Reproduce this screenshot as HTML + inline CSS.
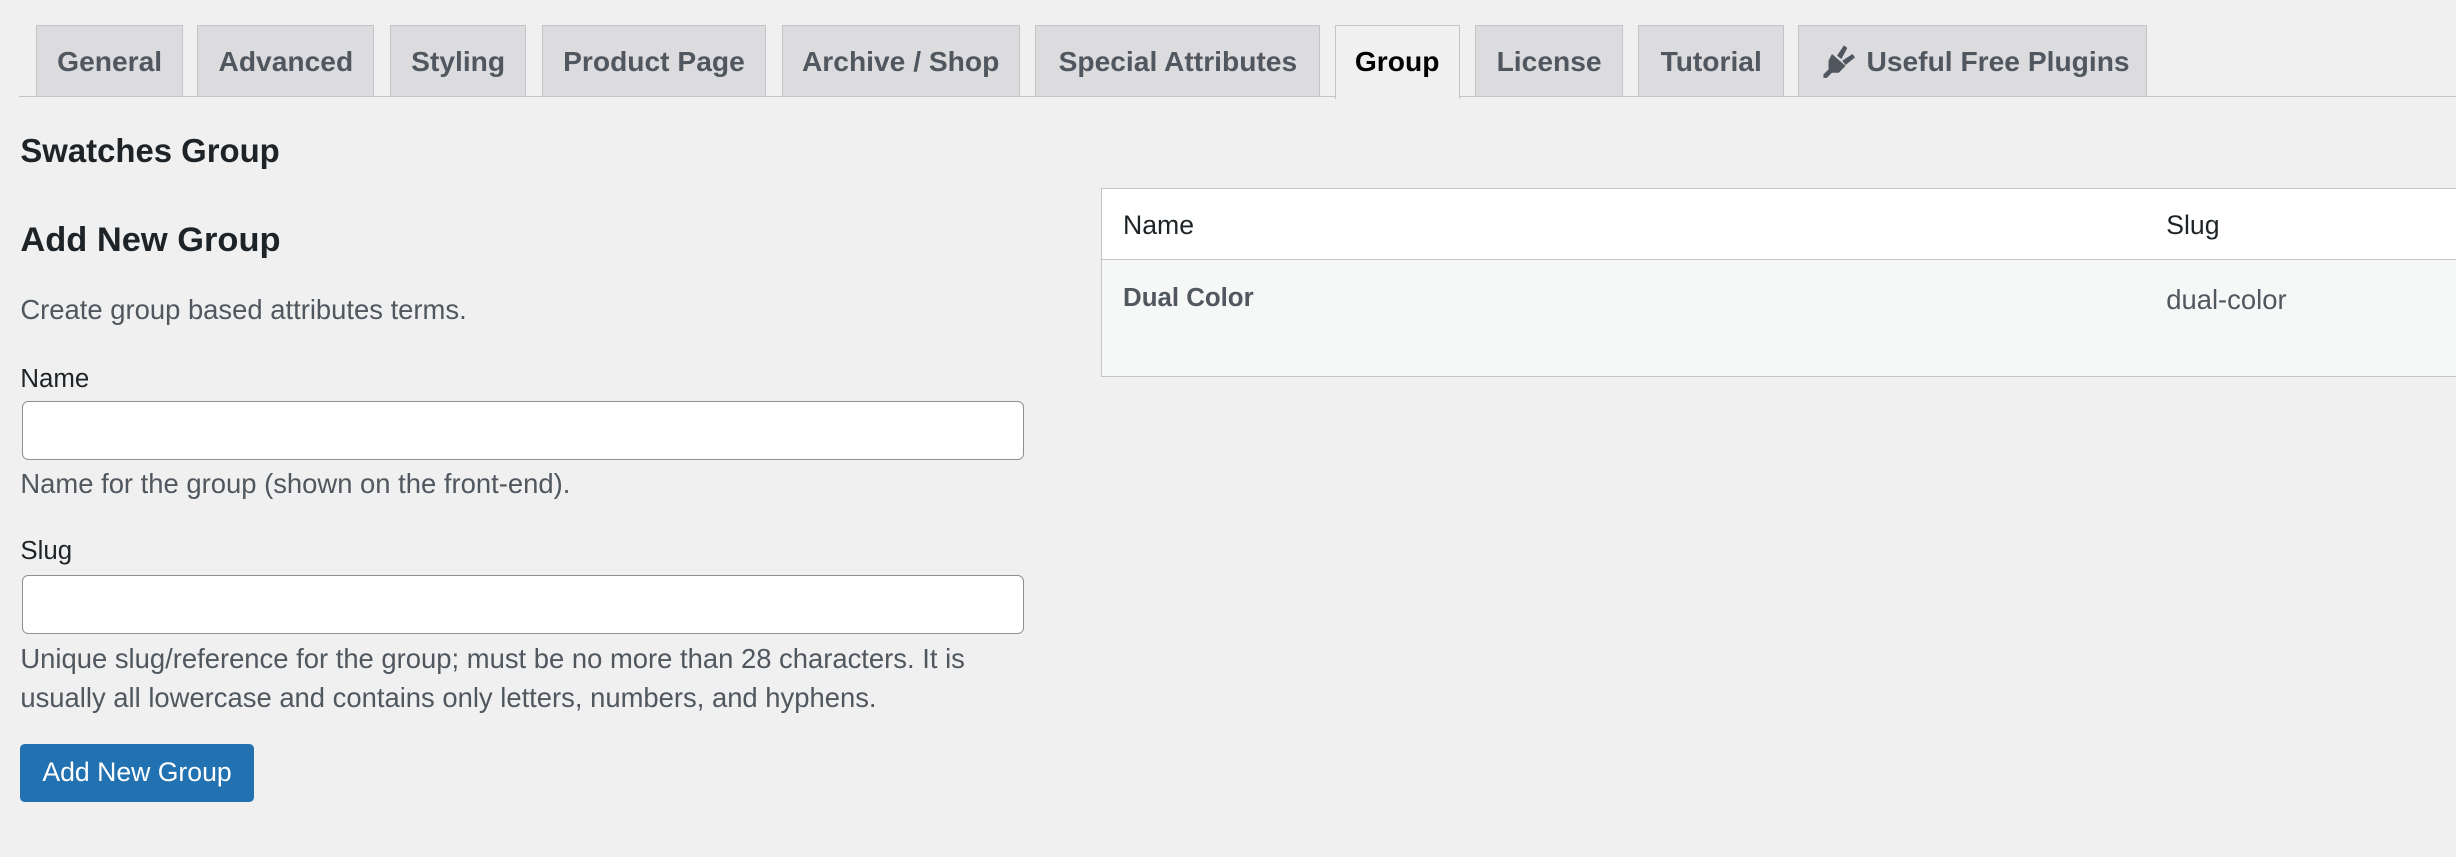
<!DOCTYPE html>
<html><head><meta charset="utf-8"><style>
html,body{margin:0;padding:0;background:#f0f0f1;}
body{width:1568px;height:547px;overflow:hidden;zoom:1.56633;font-family:"Liberation Sans",sans-serif;position:relative;color:#1d2327;}
.nav{position:absolute;left:12px;right:0;top:61px;border-top:1px solid #c3c4c7;}
.tab{position:absolute;top:16px;height:45px;background:#dcdcde;border:1px solid #c3c4c7;border-bottom:none;box-sizing:border-box;font-size:18px;font-weight:bold;color:#50575e;line-height:45px;text-align:center;}
.tab.act{background:#f0f0f1;color:#000;height:47px;border-bottom:none;}
.a{position:absolute;white-space:nowrap;}
.inp{position:absolute;left:14px;width:640px;height:38px;box-sizing:border-box;background:#fff;border:1px solid #8c8f94;border-radius:4px;}
.d{color:#50575e;font-size:17.5px;}
</style></head><body>
<div class="nav"></div>
<div class="tab" style="left:23px;width:94px">General</div>
<div class="tab" style="left:126px;width:113px">Advanced</div>
<div class="tab" style="left:249px;width:87px">Styling</div>
<div class="tab" style="left:346px;width:143px">Product Page</div>
<div class="tab" style="left:499px;width:152px">Archive / Shop</div>
<div class="tab" style="left:661px;width:182px">Special Attributes</div>
<div class="tab act" style="left:852px;width:80px">Group</div>
<div class="tab" style="left:942px;width:94px">License</div>
<div class="tab" style="left:1046px;width:93px">Tutorial</div>
<div class="tab" style="left:1148px;width:223px;text-align:left;padding-left:15px"><svg width="24" height="24" viewBox="0 0 22 22" style="position:absolute;left:13px;top:10px"><g fill="#50575e"><path d="M7 7 L15 14 L11 18 L7 18 L4 21 L2 21 L2 19 L5 16 L5 11 Z"/><path d="M10 8 L14 2 L16 3.5 L12.5 10 Z"/><path d="M13 11 L19 7 L20.5 9 L15 13.5 Z"/></g></svg><span style="margin-left:28px">Useful Free Plugins</span></div>

<div class="a" style="left:13px;top:84px;font-size:21px;font-weight:bold">Swatches Group</div>
<div class="a" style="left:13px;top:141px;font-size:22px;font-weight:bold">Add New Group</div>
<div class="a d" style="left:13px;top:188px">Create group based attributes terms.</div>
<div class="a" style="left:13px;top:233px;font-size:16.5px">Name</div>
<div class="inp" style="top:256px"></div>
<div class="a d" style="left:13px;top:299px">Name for the group (shown on the front-end).</div>
<div class="a" style="left:13px;top:343px;font-size:16.5px">Slug</div>
<div class="inp" style="top:367px"></div>
<div class="a d" style="left:13px;top:408px;line-height:25px">Unique slug/reference for the group; must be no more than 28 characters. It is<br>usually all lowercase and contains only letters, numbers, and hyphens.</div>
<div class="a" style="left:13px;top:475px;width:149px;height:37px;background:#2271b1;border-radius:3px;color:#fff;font-size:17px;line-height:37px;text-align:center">Add New Group</div>

<div class="a" style="left:703px;top:120px;width:900px;height:121px;border:1px solid #c3c4c7;box-sizing:border-box;background:#f6f7f7">
<div style="height:45px;background:#fff;border-bottom:1px solid #c3c4c7"></div>
</div>
<div class="a" style="left:717px;top:134px;font-size:17px">Name</div>
<div class="a" style="left:1383px;top:134px;font-size:17px">Slug</div>
<div class="a" style="left:717px;top:181px;font-size:16.5px;font-weight:bold;color:#50575e">Dual Color</div>
<div class="a" style="left:1383px;top:181px;font-size:17.5px;color:#50575e">dual-color</div>
</body></html>
